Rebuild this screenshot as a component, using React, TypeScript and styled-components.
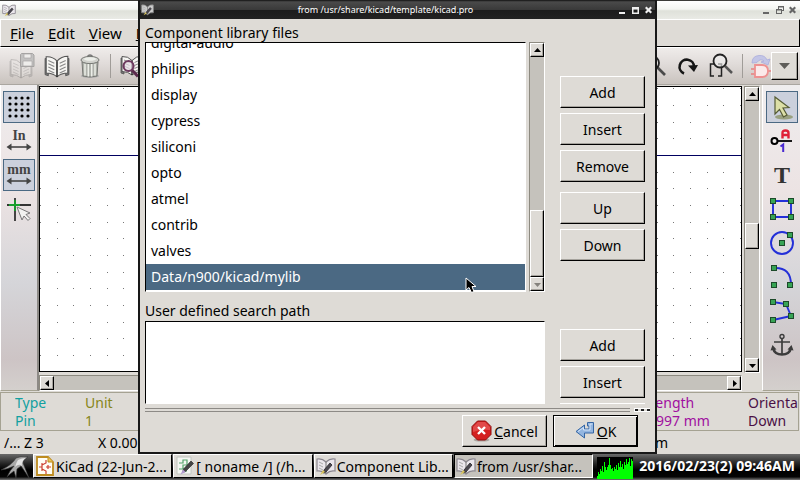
import React from "react";
import styled, { createGlobalStyle, css } from "styled-components";

const FACE = "#dedbd6";

const GlobalStyle = createGlobalStyle`
  *, *::before, *::after { box-sizing: border-box; }
  html, body, #root { height: 100%; }
  body { margin: 0; background: #000; overflow: hidden; }
  body, button, textarea { font-family: "Noto Sans", "Open Sans", sans-serif; font-size: 14px; color: #000; }
  svg { display: block; flex: none; }
`;

const raised = css`
  border: 1px solid;
  border-color: #fff #000 #000 #fff;
  box-shadow: inset -1px -1px 0 #a5a29c;
`;

const Desktop = styled.div`
  position: relative;
  display: flex;
  flex-direction: column;
  height: 100vh;
  overflow: hidden;
  background: ${FACE};
`;

/* ---------- main window ---------- */
const MainWindow = styled.main`
  flex: 1;
  min-height: 0;
  display: flex;
  flex-direction: column;
`;

const MainTitle = styled.header`
  height: 19px;
  flex: none;
  display: flex;
  align-items: center;
  justify-content: space-between;
  padding: 0 2px;
  border-top: 1px solid #3c3b38;
  background: linear-gradient(#fff, #f4f5f1 45%, #dfe1da 55%, #e9eae5);
`;

const TitleButtons = styled.div`
  display: flex;
  gap: 1px;
`;

const TitleButton = styled.button`
  width: 12px;
  height: 16px;
  padding: 0;
  border: 0;
  background: none;
  display: grid;
  place-items: center;
`;

const MenuBar = styled.nav`
  height: 28px;
  flex: none;
  display: flex;
  align-items: center;
  gap: 14px;
  padding: 0 9px;
  border: 1px solid #fff;
  border-right-color: #000;
  border-bottom-color: #000;
`;

const MenuItem = styled.button`
  padding: 0;
  border: 0;
  background: none;
  font-size: 15px;
  line-height: 24px;
`;

const Toolbar = styled.div`
  height: 38px;
  flex: none;
  display: flex;
  justify-content: space-between;
  align-items: center;
  border-top: 1px solid #fff;
  border-bottom: 1px solid #aaa6a0;
  background: linear-gradient(#efecea, #e0dbd9 45%, #c9c3be);
`;

const ToolGroup = styled.div<{ $side: "left" | "right" }>`
  display: flex;
  align-items: center;
  gap: ${(p) => (p.$side === "left" ? "9px" : "8px")};
  padding: ${(p) => (p.$side === "left" ? "0 0 0 9px" : "0 2px 0 0")};
`;

const IconButton = styled.button`
  padding: 0;
  border: 0;
  background: none;
`;

const Separator = styled.span`
  width: 1px;
  height: 24px;
  background: #a09c98;
`;

const Overflow = styled.button`
  ${raised}
  width: 27px;
  height: 28px;
  margin-left: -8px;
  padding: 0;
  display: grid;
  place-items: center;
  background: ${FACE};
`;

const Body = styled.div`
  flex: 1;
  min-height: 0;
  display: flex;
`;

const SideBar = styled.div<{ $side: "left" | "right" }>`
  width: ${(p) => (p.$side === "left" ? 39 : 38)}px;
  flex: none;
  display: flex;
  flex-direction: column;
  align-items: center;
  gap: 2px;
  padding-top: 6px;
  border-left: 1px solid #fff;
  border-right: ${(p) => (p.$side === "left" ? "2px solid #8d8a86" : "0")};
  border-bottom: 1px solid #a5a292;
  background: linear-gradient(#efedee, #ece3e3 35%, #d5d5d9 65%, #cdc4c5 90%, #d4d0cd);
`;

const ToolToggle = styled.button<{ $on?: boolean }>`
  width: 32px;
  height: 32px;
  flex: none;
  padding: 0;
  display: grid;
  place-items: center;
  border: 1px solid ${(p) => (p.$on ? "#4b6983" : "transparent")};
  background: ${(p) => (p.$on ? "#cbd0dc" : "transparent")};
`;

const Sheet = styled.div`
  flex: 1;
  min-width: 0;
  display: flex;
  flex-direction: column;
  padding-top: 1px;
`;

const Drawing = styled.div`
  flex: 1;
  min-height: 0;
  border: 1px solid #000;
  background: #fff;
`;

const BottomScroll = styled.div`
  padding-top: 3px;
`;

const RightScroll = styled.div`
  width: 20px;
  flex: none;
  display: flex;
  padding: 1px 2px 18px 2px;
`;

/* ---------- scroll bars ---------- */
const ScrollTrack = styled.div<{ $horizontal?: boolean }>`
  flex: 1;
  display: flex;
  flex-direction: ${(p) => (p.$horizontal ? "row" : "column")};
  justify-content: space-between;
  border: 1px solid;
  border-color: #8d8a80 #fff #fff #8d8a80;
  background: #c5c2bc;
`;

const ScrollArrow = styled.button`
  ${raised}
  width: 14px;
  height: 14px;
  flex: none;
  padding: 0;
  display: grid;
  place-items: center;
  background: ${FACE};
`;

const Thumb = styled.div<{ $size: number }>`
  ${raised}
  height: ${(p) => p.$size}px;
  flex: none;
  background: ${FACE};
`;

const Gap = styled.span<{ $grow: number }>`
  flex: ${(p) => p.$grow} 1 0;
`;

/* ---------- info and status ---------- */
const InfoPanel = styled.dl`
  height: 39px;
  flex: none;
  display: grid;
  grid-template-columns: 70px 1fr 100px 50px;
  margin: 1px 1px 0 0;
  padding: 1px 0 0 14px;
  border: 1px solid #a5a292;
  overflow: hidden;
`;

const InfoItem = styled.div<{ $color: string }>`
  color: ${(p) => p.$color};
  line-height: 18px;
  white-space: nowrap;
  overflow: hidden;
  dt, dd { margin: 0; }
`;

const StatusBar = styled.footer`
  height: 23px;
  flex: none;
  display: grid;
  grid-template-columns: 94px 1fr 158px;
  align-items: center;
  padding-left: 4px;
`;

/* ---------- dialog ---------- */
const Dialog = styled.section`
  position: absolute;
  top: 0;
  left: 138px;
  right: 143px;
  bottom: 26px;
  display: flex;
  flex-direction: column;
  border: solid #181818;
  border-width: 0 2px 2px 2px;
  background: ${FACE};
`;

const DialogTitle = styled.header`
  height: 19px;
  flex: none;
  display: grid;
  grid-template-columns: 14px 1fr 38px;
  align-items: center;
  padding: 0 1px;
  color: #fff;
  background: linear-gradient(#111, #4a4a4a 10%, #3a3a3a 50%, #1c1c1c 55%, #222);
`;

const DialogHeading = styled.h1`
  margin: 0;
  text-align: center;
  font-size: 9px;
  font-weight: 400;
  line-height: 18px;
  white-space: nowrap;
`;

const Section = styled.div<{ $offset: number }>`
  display: grid;
  grid-template-columns: 1fr 85px;
  column-gap: 15px;
  padding: ${(p) => p.$offset}px 10px 0 5px;
`;

const FieldLabel = styled.label`
  grid-column: 1 / -1;
  line-height: 18px;
`;

const ListRow = styled.div`
  display: flex;
  gap: 3px;
  height: 250px;
`;

const ListBox = styled.ul`
  flex: 1;
  margin: 0;
  padding: 0 0 1px;
  list-style: none;
  display: flex;
  flex-direction: column;
  justify-content: flex-end;
  overflow: hidden;
  border: 1px solid;
  border-color: #000 #fff #fff #000;
  background: #fff;
`;

const ListItem = styled.li`
  flex: none;
  padding-left: 5px;
  line-height: 26px;
  &[aria-selected="true"] { background: #4b6983; color: #fff; }
`;

const ScrollColumn = styled.div`
  width: 16px;
  flex: none;
  display: flex;
`;

const PathBox = styled.textarea`
  display: block;
  width: 100%;
  height: 83px;
  margin: 1px 0 0;
  resize: none;
  border: 1px solid;
  border-color: #000 #fff #fff #000;
  outline: none;
  background: #fff;
`;

const ButtonColumn = styled.div<{ $offset: number }>`
  display: flex;
  flex-direction: column;
  gap: 5px;
  padding-top: ${(p) => p.$offset}px;
`;

const PushButton = styled.button<{ $default?: boolean; $spaced?: boolean }>`
  ${raised}
  width: 85px;
  height: 32px;
  flex: none;
  padding: 0;
  display: flex;
  align-items: center;
  justify-content: center;
  gap: 2px;
  background: ${FACE};
  margin-top: ${(p) => (p.$spaced ? "5px" : "0")};
  ${(p) => p.$default && css`border-color: #000; box-shadow: inset 1px 1px 0 #fff, inset -1px -1px 0 #000;`}
`;

const NextEdge = styled.span`
  height: 1px;
  background: #fff;
`;

const DividerRow = styled.div`
  display: flex;
  gap: 4px;
  margin: 4px 5px 0;
`;

const Divider = styled.hr`
  flex: 1;
  height: 4px;
  margin: 0;
  border: solid #8d8a86;
  border-width: 1px 0;
  background: ${FACE};
`;

const DividerGrip = styled.span`
  width: 16px;
  height: 4px;
  border: solid #fff;
  border-width: 1px 0 1px 1px;
  background: repeating-linear-gradient(90deg, #222 0 3px, ${FACE} 3px 6px);
`;

const Actions = styled.div`
  display: flex;
  justify-content: flex-end;
  gap: 6px;
  padding: 3px 17px 0;
`;

/* ---------- task bar ---------- */
const TaskBar = styled.footer`
  height: 26px;
  flex: none;
  display: flex;
  align-items: stretch;
  background: linear-gradient(#6a6a6a, #222 38%, #000 60%, #050505 88%, #777);
`;

const StartButton = styled.button`
  width: 33px;
  padding: 0;
  border: 0;
  background: none;
`;

const Tasks = styled.div`
  flex: 1;
  min-width: 0;
  display: grid;
  grid-template-columns: repeat(4, 1fr);
  gap: 1px;
  padding-bottom: 2px;
`;

const Task = styled.button<{ $active?: boolean }>`
  min-width: 0;
  display: flex;
  align-items: center;
  gap: 1px;
  padding: 0 1px;
  border: 1px solid;
  border-color: ${(p) => (p.$active ? "#000 #fff #fff #000" : "#fff #000 #000 #fff")};
  background: ${(p) => (p.$active ? "#c5c2bc" : FACE)};
  white-space: nowrap;
`;

const Clock = styled.time`
  padding: 0 5px 0 6px;
  color: #fff;
  font-weight: 700;
  line-height: 24px;
`;

const Load = styled.div`
  padding: 3px 0 0 4px;
`;

/* ---------- icons ---------- */
const arrowPaths = { up: "M1 6 4.5 2 8 6Z", down: "M1 3h7L4.5 7Z", left: "M6 1v7L2 4.5Z", right: "M3 1v7L7 4.5Z" };
const Arrow = ({ dir, dim }: { dir: keyof typeof arrowPaths; dim?: boolean }) => (
  <svg width="9" height="9" viewBox="0 0 9 9"><path d={arrowPaths[dir]} fill={dim ? "#85827d" : "#000"} /></svg>
);

const bookShape = (
  <>
    <path d="M1 5v15l3 1v-15z M23 5v15l-3 1V6z" fill="#777" stroke="#555" strokeWidth=".8" />
    <path d="M2 3.500Q8 3 12 7.500Q16 3 22 3V18.500Q16 18.500 12 22Q8 18.500 2 18.500Z" fill="#f6f5f2" stroke="#555" strokeWidth="1" />
    <path d="M12 7.500V22" stroke="#222" strokeWidth="1.400" />
    <path d="M4 7l5.500 2.500M4 10l5.500 2.500M4 13l5.500 2.500M4 16l5.500 2.500M20 7l-5.500 2.500M20 10l-5.500 2.500M20 13l-5.500 2.500M20 16l-5.500 2.500" stroke="#888" strokeWidth="1" fill="none" />
  </>
);

const BookIcon = () => <svg width="26" height="26" viewBox="0 0 24 24">{bookShape}</svg>;

const SaveIcon = () => (
  <svg width="26" height="28" viewBox="0 0 26 28">
    <g opacity=".25"><g transform="translate(0 4)">{bookShape}</g></g>
    <path d="M12.500 1.500h11l1.500 1.500v11.500h-13.500v-12z" fill="#c2c1c0" stroke="#a5a3a2" />
    <path d="M15 2h7v4h-7zM14 9h9v5h-9z" fill="#eeedeb" stroke="#aaa8a7" strokeWidth=".7" />
  </svg>
);

const TrashIcon = () => (
  <svg width="22" height="26" viewBox="0 0 22 26">
    <ellipse cx="11" cy="23" rx="9" ry="1.800" fill="#aaa" />
    <path d="M3 9h16l-1 14q-7 2-14 0z" fill="#aeb0aa" stroke="#767874" />
    <path d="M6 10.500v12M9.300 10.500v13M12.700 10.500v13M16 10.500v12" stroke="#eceee8" strokeWidth="1.500" />
    <path d="M8 4q3-4 6 0" fill="none" stroke="#777" strokeWidth="1.300" />
    <ellipse cx="11" cy="7" rx="9" ry="3.600" fill="#d0d1cc" stroke="#767874" />
    <ellipse cx="11" cy="6" rx="6" ry="1.700" fill="#eceee9" />
  </svg>
);

const LibrarySearchIcon = () => (
  <svg width="28" height="26" viewBox="0 0 28 26">
    {bookShape}
    <path d="M12 17 18 23.500" stroke="#5b2a4d" strokeWidth="3" />
    <circle cx="8.500" cy="13" r="5" fill="#e7dde6" fillOpacity=".7" stroke="#6d3a5f" strokeWidth="2.200" />
  </svg>
);

const ZoomIcon = () => (
  <svg width="26" height="26" viewBox="0 0 26 26">
    <path d="m15 14 8 8" stroke="#4a4a4a" strokeWidth="2.600" />
    <circle cx="10" cy="10" r="7" fill="#eee" fillOpacity=".5" stroke="#222" strokeWidth="1.800" />
  </svg>
);

const RedrawIcon = () => (
  <svg width="24" height="24" viewBox="0 0 24 24">
    <path d="M8 19.500A7.200 7.200 0 1 1 18 13" fill="none" stroke="#161616" strokeWidth="2.600" />
    <path d="m12 11.500 10-.5-4 7z" fill="#161616" />
  </svg>
);

const ZoomFitIcon = () => (
  <svg width="26" height="26" viewBox="0 0 26 26">
    <path d="M6 11H2.500v12H6M10 11h3.500v12H10" fill="none" stroke="#222" strokeWidth="1.500" />
    <path d="m17 13 7 7" stroke="#555" strokeWidth="2.500" />
    <circle cx="12" cy="8" r="6.500" fill="#eee" fillOpacity=".6" stroke="#222" strokeWidth="1.800" />
  </svg>
);

const GateIcon = () => (
  <svg width="20" height="24" viewBox="0 0 20 24">
    <path d="M1 9Q1 2 8 1.500 14 1 16 6l3-1-2 6-7-3 3-1Q9 4 6 8.500z" fill="#c3c5e6" stroke="#a9acdc" strokeWidth=".8" />
    <path d="M0 15h4M0 20h4M16 17h4" stroke="#e88080" strokeWidth="1.500" />
    <path d="M4 11h7q6 0 6 6t-6 6H4z" fill="#fbeaea" stroke="#ee9191" strokeWidth="1.800" />
  </svg>
);

const GridIcon = () => (
  <svg width="26" height="26" viewBox="0 0 26 26">
    {[4, 10, 16, 22].flatMap((y) => [4, 10, 16, 22].map((x) => <circle key={`${x}-${y}`} cx={x} cy={y} r="1.600" />))}
  </svg>
);

const UnitIcon = ({ unit }: { unit: string }) => (
  <svg width="28" height="26" viewBox="0 0 28 26">
    <text x="14" y="12" textAnchor="middle" fontFamily="'Liberation Serif', serif" fontWeight="700" fontSize="14" fill="#444">{unit}</text>
    <path d="M4 19h20" stroke="#444" strokeWidth="1.600" />
    <path d="m1.500 19 5-3.500v7zM26.500 19l-5-3.500v7z" fill="#444" />
  </svg>
);

const CrossCursorIcon = () => (
  <svg width="26" height="26" viewBox="0 0 26 26">
    <path d="M9 2v23M1 9h24" stroke="#333" strokeWidth="1.800" />
    <path d="M9 4v11M3 9h11" stroke="#16a02c" strokeWidth="1.800" />
    <path d="m11 11 13 6-4 1.500 4 4-2 2-4-4.500-2 4z" fill="#f2f2f0" stroke="#777" />
  </svg>
);

const PointerIcon = () => (
  <svg width="26" height="26" viewBox="0 0 26 26">
    <ellipse cx="15" cy="23" rx="9" ry="2.500" fill="#8c9368" opacity=".8" />
    <path d="m6 3 14 10.500-6 .5 4 7-3.500 2-4-7.500L6 20z" fill="#dcdfa6" stroke="#555b35" strokeWidth="1.200" />
  </svg>
);

const PinIcon = () => (
  <svg width="26" height="26" viewBox="0 0 26 26">
    <path d="M8 13h15" stroke="#000" strokeWidth="1.800" />
    <circle cx="5.500" cy="13" r="3" fill="#f3efef" stroke="#000" strokeWidth="2" />
    <path d="M13.500 10.500V5q0-2.500 3-2.500t3 2.500v5.500M13.500 7h6" fill="none" stroke="#df2038" strokeWidth="2.400" />
    <path d="m11.500 18.500 2.700-2V24" fill="none" stroke="#4a2ad0" strokeWidth="2" />
  </svg>
);

const TextIcon = () => (
  <svg width="26" height="26" viewBox="0 0 26 26">
    <text x="13" y="21" textAnchor="middle" fontFamily="'Liberation Serif', serif" fontWeight="700" fontSize="24" fill="#333">T</text>
  </svg>
);

const Nodes = ({ at }: { at: number[][] }) => (
  <>{at.map(([x, y]) => <rect key={`${x}-${y}`} x={x - 2.5} y={y - 2.5} width="5" height="5" fill="#37a455" stroke="#1c4a2a" />)}</>
);

const shapes = {
  box: { path: "M4 5h18v16H4z", nodes: [[4, 5], [22, 5], [4, 21], [22, 21]] },
  circle: { path: "M24 13A11 11 0 1 1 2 13A11 11 0 1 1 24 13", nodes: [[13, 13], [21, 5]] },
  arc: { path: "M5 4Q22 3 22 21", nodes: [[5, 4], [5, 21], [21, 21]] },
  line: { path: "M4 4 17 6 22 18 4 22", nodes: [[4, 4], [17, 6], [22, 18], [4, 22]] },
};
const ShapeIcon = ({ kind }: { kind: keyof typeof shapes }) => (
  <svg width="26" height="26" viewBox="0 0 26 26">
    <path d={shapes[kind].path} fill="none" stroke="#2430d8" strokeWidth="1.900" />
    <Nodes at={shapes[kind].nodes} />
  </svg>
);

const AnchorIcon = () => (
  <svg width="26" height="26" viewBox="0 0 26 26" fill="none" stroke="#3c3c3c">
    <circle cx="13" cy="4.500" r="2" strokeWidth="1.400" />
    <path d="M13 7v15M5 10h16" strokeWidth="1.700" />
    <path d="M4 16q1.500 6.500 9 6.500T22 16" strokeWidth="2.500" />
    <path d="M1.500 18.500 3.500 13l4 4.500zM24.500 18.500 22.500 13l-4 4.500z" fill="#3c3c3c" stroke="none" />
  </svg>
);

const LibEditIcon = ({ size, light }: { size: number; light?: boolean }) => (
  <svg width={size} height={size} viewBox="0 0 20 20">
    <path d="M1 3Q6 2 10 6Q14 2 19 3V15Q14 14 10 18Q6 14 1 15Z" fill={light ? "#ccc" : "#ebe7ec"} stroke={light ? "#888" : "#8a868e"} strokeWidth="1.200" />
    <path d="M10 6v11" stroke="#777" />
    <path d="M3 6l4 2M3 9l4 2M3 12l4 2" stroke="#aaa" />
    <path d="m14 7 2 2-6 7-3 1 1-3z" fill="#4b4850" stroke="#29272c" strokeWidth=".8" />
    <path d="m4 19 3-5 2 2z" fill="#d8c45a" />
  </svg>
);

const KiCadIcon = () => (
  <svg width="20" height="20" viewBox="0 0 20 20">
    <path d="M2 1h11l5 5v13H2z" fill="#fffdf3" stroke="#bd8b1e" strokeWidth="1.800" />
    <path d="M13 1v5h5" fill="#e9c65b" stroke="#bd8b1e" />
    <path d="M4 11h3M7 7v8M7 9l4-2V4M7 13l4 2v3M11 11h5M13 9v4" stroke="#cc4030" strokeWidth="1.200" fill="none" />
  </svg>
);

const SchematicIcon = () => (
  <svg width="20" height="20" viewBox="0 0 20 20">
    <path d="M2 1h14v17H2z" fill="#f5f7f3" stroke="#c2c6c0" />
    <path d="M4 7h4V4h4v5H8v4h3v3M4 13h4" stroke="#54a36a" strokeWidth="1.200" fill="none" />
    <path d="m16 5 2.500 2.500-8 8-3 1 1-3.500z" fill="#444" stroke="#222" strokeWidth=".6" />
    <path d="m5.500 18.500 2.500-5 2.500 2.500z" fill="#b39bd0" />
  </svg>
);

const CancelIcon = () => (
  <svg width="21" height="22" viewBox="0 0 21 22">
    <ellipse cx="10.500" cy="20" rx="8" ry="1.600" fill="#aaa6a0" />
    <path d="M6.500 1h8L20 6.500v8L14.500 20h-8L1 14.500v-8z" fill="#d42020" stroke="#8f0d0d" />
    <path d="M7 2h7l5 5v3Q10 9 2 12V7z" fill="#ea6565" opacity=".6" />
    <path d="m7 7 7 7M14 7l-7 7" stroke="#fff" strokeWidth="2.400" />
  </svg>
);

const ReturnIcon = () => (
  <svg width="20" height="20" viewBox="0 0 20 20">
    <path d="M12.500 1.500h6V12h-9v5L1 10.500 9.500 4v4h4.500V5h-1.500z" fill="#93b5e0" stroke="#3465a4" />
    <path d="m3 10.500 5.500-4V9H15V3h2.500" fill="none" stroke="#d4e4f7" />
  </svg>
);

const LogoIcon = () => (
  <svg width="33" height="24" viewBox="0 0 33 24">
    <path d="M1 15Q12 10 16 3q4-2 12-1-5 2-5 6l6 15q-5-8-8-12l-4 3-1 9-2-7q-3 2-7 6 3-7 7-11-6 3-13 4z" fill="#a9a9a9" stroke="#333" strokeWidth=".6" />
    <path d="M18 5q4-2 8-2-5 3-4 8-3-3-7 1 1-4 3-7z" fill="#e4e4e4" />
  </svg>
);

const loadValues = [3, 7, 5, 10, 8, 13, 7, 17, 12, 9, 12, 14, 21, 14, 10, 11, 8, 12, 10, 14, 9, 16, 12, 18, 12, 15, 10, 17, 14, 20, 15, 17, 21, 13, 20, 18];
const LoadGraph = () => (
  <svg width="36" height="22" viewBox="0 0 36 22" shapeRendering="crispEdges">
    <rect width="36" height="22" fill="#000" />
    {loadValues.map((v, i) => <rect key={i} x={i} y={22 - v} width="1" height={v} fill="#0f0" />)}
  </svg>
);

const Cursor = styled.svg`
  position: absolute;
  left: 465px;
  top: 277px;
`;

const windowGlyphs = {
  minimize: "M1 7h6v2H1z",
  maximize: "M1 2h7v7H1zM2.500 4.500V7.500h4V4.500z",
  restore: "M3 1h6v5H7v3H1V4h2zM4 2.500V4h3v1h1V2.500zM2 5.500V8h4V5.500z",
  close: "m1 3 1.500-1.500L4.500 3.500 6.500 1.500 8 3 6 5 8 7 6.500 8.500 4.500 6.500 2.500 8.500 1 7 3 5z",
};
const WindowGlyph = ({ kind, color }: { kind: keyof typeof windowGlyphs; color: string }) => (
  <svg width="9" height="10" viewBox="0 0 9 10"><path fillRule="evenodd" d={windowGlyphs[kind]} fill={color} /></svg>
);

const libraries = ["digital-audio", "philips", "display", "cypress", "siliconi", "opto", "atmel", "contrib", "valves", "Data/n900/kicad/mylib"];

const Accel = ({ text }: { text: string }) => <span><u>{text[0]}</u>{text.slice(1)}</span>;

export default function App() {
  return (
    <>
      <GlobalStyle />
      <Desktop>
        <MainWindow>
          <MainTitle>
            <LibEditIcon size={14} />
            <TitleButtons>
              {(["minimize", "restore", "close"] as const).map((k) => (
                <TitleButton key={k} aria-label={k}><WindowGlyph kind={k} color="#666" /></TitleButton>
              ))}
            </TitleButtons>
          </MainTitle>
          <MenuBar>
            {["File", "Edit", "View", "Place"].map((m) => <MenuItem key={m}><Accel text={m} /></MenuItem>)}
          </MenuBar>
          <Toolbar>
            <ToolGroup $side="left">
              <IconButton aria-label="Save library"><SaveIcon /></IconButton>
              <IconButton aria-label="Select library"><BookIcon /></IconButton>
              <IconButton aria-label="Delete component"><TrashIcon /></IconButton>
              <Separator />
              <IconButton aria-label="Browse library"><LibrarySearchIcon /></IconButton>
            </ToolGroup>
            <ToolGroup $side="right">
              <IconButton aria-label="Zoom out"><ZoomIcon /></IconButton>
              <IconButton aria-label="Redraw"><RedrawIcon /></IconButton>
              <IconButton aria-label="Zoom to fit"><ZoomFitIcon /></IconButton>
              <Separator />
              <IconButton aria-label="Convert shape"><GateIcon /></IconButton>
              <Overflow aria-label="More tools">
                <svg width="13" height="8" viewBox="0 0 13 8"><path d="M1 1h11L6.500 7z" fill="#5e5d59" /></svg>
              </Overflow>
            </ToolGroup>
          </Toolbar>
          <Body>
            <SideBar $side="left">
              <ToolToggle $on aria-label="Grid"><GridIcon /></ToolToggle>
              <ToolToggle aria-label="Inches"><UnitIcon unit="In" /></ToolToggle>
              <ToolToggle $on aria-label="Millimetres"><UnitIcon unit="mm" /></ToolToggle>
              <ToolToggle aria-label="Cursor shape"><CrossCursorIcon /></ToolToggle>
            </SideBar>
            <Sheet>
              <Drawing>
                <svg width="100%" height="100%" shapeRendering="crispEdges">
                  <defs>
                    <pattern id="dots" width="50" height="50" patternUnits="userSpaceOnUse">
                      {[1, 18, 35].flatMap((y) => [0, 17, 33].map((x) => <rect key={`${x}-${y}`} x={x} y={y} width="1" height="1" fill="#777" />))}
                    </pattern>
                  </defs>
                  <rect width="100%" height="100%" fill="url(#dots)" />
                  <rect y="68" width="100%" height="1" fill="#000060" />
                </svg>
              </Drawing>
              <BottomScroll>
                <ScrollTrack $horizontal>
                  <ScrollArrow aria-label="Scroll left"><Arrow dir="left" /></ScrollArrow>
                  <ScrollArrow aria-label="Scroll right"><Arrow dir="right" /></ScrollArrow>
                </ScrollTrack>
              </BottomScroll>
            </Sheet>
            <RightScroll>
              <ScrollTrack>
                <ScrollArrow aria-label="Scroll up"><Arrow dir="up" /></ScrollArrow>
                <Gap $grow={9} />
                <Thumb $size={26} />
                <Gap $grow={8} />
                <ScrollArrow aria-label="Scroll down"><Arrow dir="down" /></ScrollArrow>
              </ScrollTrack>
            </RightScroll>
            <SideBar $side="right">
              <ToolToggle $on aria-label="Select"><PointerIcon /></ToolToggle>
              <ToolToggle aria-label="Add pin"><PinIcon /></ToolToggle>
              <ToolToggle aria-label="Add text"><TextIcon /></ToolToggle>
              <ToolToggle aria-label="Add rectangle"><ShapeIcon kind="box" /></ToolToggle>
              <ToolToggle aria-label="Add circle"><ShapeIcon kind="circle" /></ToolToggle>
              <ToolToggle aria-label="Add arc"><ShapeIcon kind="arc" /></ToolToggle>
              <ToolToggle aria-label="Add lines"><ShapeIcon kind="line" /></ToolToggle>
              <ToolToggle aria-label="Set anchor"><AnchorIcon /></ToolToggle>
            </SideBar>
          </Body>
          <InfoPanel>
            <InfoItem $color="#12a0a0"><dt>Type</dt><dd>Pin</dd></InfoItem>
            <InfoItem $color="#86861a"><dt>Unit</dt><dd>1</dd></InfoItem>
            <InfoItem $color="#a010a0"><dt>Length</dt><dd>2997 mm</dd></InfoItem>
            <InfoItem $color="#4a1045"><dt>Orienta</dt><dd>Down</dd></InfoItem>
          </InfoPanel>
          <StatusBar><span>/... Z 3</span><span>X 0.00</span><span>mm</span></StatusBar>
        </MainWindow>

        <TaskBar>
          <StartButton aria-label="Menu"><LogoIcon /></StartButton>
          <Tasks>
            <Task><KiCadIcon />KiCad (22-Jun-2...</Task>
            <Task><SchematicIcon />[ noname /] (/h...</Task>
            <Task><LibEditIcon size={20} />Component Lib...</Task>
            <Task $active><LibEditIcon size={20} />from /usr/shar...</Task>
          </Tasks>
          <Load><LoadGraph /></Load>
          <Clock>2016/02/23(2) 09:46AM</Clock>
        </TaskBar>

        <Dialog role="dialog" aria-labelledby="dialog-title">
          <DialogTitle>
            <LibEditIcon size={13} light />
            <DialogHeading id="dialog-title">from /usr/share/kicad/template/kicad.pro</DialogHeading>
            <TitleButtons>
              {(["minimize", "maximize", "close"] as const).map((k) => (
                <TitleButton key={k} aria-label={k}><WindowGlyph kind={k} color="#eee" /></TitleButton>
              ))}
            </TitleButtons>
          </DialogTitle>
          <Section $offset={5}>
            <FieldLabel as="div" id="files-label">Component library files</FieldLabel>
            <ListRow>
              <ListBox role="listbox" tabIndex={0} aria-labelledby="files-label">
                {libraries.map((name, i) => (
                  <ListItem key={name} role="option" aria-selected={i === libraries.length - 1}>{name}</ListItem>
                ))}
              </ListBox>
              <ScrollColumn>
                <ScrollTrack>
                  <ScrollArrow aria-label="Scroll up"><Arrow dir="up" /></ScrollArrow>
                  <Gap $grow={1} />
                  <Thumb $size={67} />
                  <ScrollArrow aria-label="Scroll down"><Arrow dir="down" dim /></ScrollArrow>
                </ScrollTrack>
              </ScrollColumn>
            </ListRow>
            <ButtonColumn $offset={34}>
              <PushButton>Add</PushButton>
              <PushButton>Insert</PushButton>
              <PushButton>Remove</PushButton>
              <PushButton $spaced>Up</PushButton>
              <PushButton>Down</PushButton>
            </ButtonColumn>
          </Section>
          <Section $offset={10}>
            <FieldLabel htmlFor="search-path">User defined search path</FieldLabel>
            <PathBox id="search-path" />
            <ButtonColumn $offset={9}>
              <PushButton>Add</PushButton>
              <PushButton>Insert</PushButton>
              <NextEdge />
            </ButtonColumn>
          </Section>
          <DividerRow><Divider /><DividerGrip /></DividerRow>
          <Actions>
            <PushButton><CancelIcon /><Accel text="Cancel" /></PushButton>
            <PushButton $default><ReturnIcon /><Accel text="OK" /></PushButton>
          </Actions>
        </Dialog>

        <Cursor width="12" height="17" viewBox="0 0 12 17">
          <path d="M1 1v12l3-2.500L6.500 15.500 9 14.500 7 9.500h4z" fill="#000" stroke="#fff" />
        </Cursor>
      </Desktop>
    </>
  );
}
